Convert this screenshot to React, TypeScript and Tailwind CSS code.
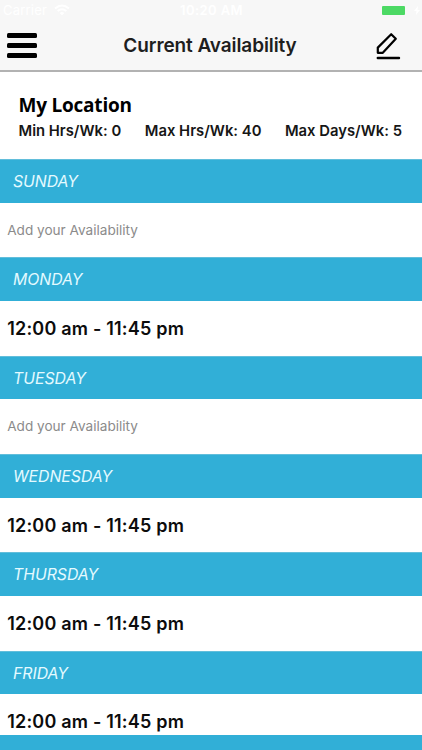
const days = [
  { name: 'SUNDAY', hours: null },
  { name: 'MONDAY', hours: '12:00 am - 11:45 pm' },
  { name: 'TUESDAY', hours: null },
  { name: 'WEDNESDAY', hours: '12:00 am - 11:45 pm' },
  { name: 'THURSDAY', hours: '12:00 am - 11:45 pm' },
  { name: 'FRIDAY', hours: '12:00 am - 11:45 pm' },
];

function StatusBar() {
  return (
    <div className="flex h-5 items-center pr-0.5 pl-[3px] text-[13px] leading-5 text-white">
      <div className="flex flex-1 items-center gap-[7px]">
        <span className="tracking-[0.2px]">Carrier</span>
        <svg width="16" height="12" viewBox="0 0 16 12" fill="none" stroke="currentColor" strokeWidth="2">
          <path d="M1 4.5Q8-1.5 15 4.5M3.6 7.1Q8 3.4 12.4 7.1" />
          <path d="M5.7 9Q8 7.2 10.3 9L8 11.4Z" fill="currentColor" stroke="none" />
        </svg>
      </div>
      <span className="font-semibold tracking-[0.4px]">10:20 AM</span>
      <div className="flex flex-1 items-center justify-end gap-[9px]">
        <span className="h-[9px] w-[23px] rounded-[1px] bg-[#4cd964]" />
        <svg width="6" height="9" viewBox="0 0 6 9" fill="currentColor">
          <path d="M4 0L0 5h2.5L2 9l4-5H3.5Z" />
        </svg>
      </div>
    </div>
  );
}

function Header() {
  return (
    <header className="h-[72px] shrink-0 border-b-2 border-[#b2b2b2] bg-[#f7f7f7]">
      <StatusBar />
      <div className="flex h-[50px] items-center justify-between pr-[21px] pl-[7px]">
        <button className="flex w-[30px] flex-col gap-[5px]" aria-label="Menu">
          <span className="h-[5px] w-full rounded-[1.5px] bg-black" />
          <span className="h-[5px] w-full rounded-[1.5px] bg-black" />
          <span className="h-[5px] w-full rounded-[1.5px] bg-black" />
        </button>
        <h1 className="pt-[2px] pl-[7px] text-[19px] font-semibold tracking-[-0.09px] whitespace-nowrap text-[#1e1e1e]">
          Current Availability
        </h1>
        <button aria-label="Edit" className="pt-px">
          <svg className="block" width="25" height="28" viewBox="0 0 25 28" fill="none" stroke="#000" strokeWidth="2.2">
            <path d="M1.8 20.8V15.6L15.2 2.2L19.8 6.8L6.8 20.8Z" strokeLinejoin="round" />
            <path d="M1.8 26H23" strokeWidth="2.4" strokeLinecap="round" />
          </svg>
        </button>
      </div>
    </header>
  );
}

export default function App() {
  return (
    <main className="flex h-[750px] w-[422px] flex-col overflow-hidden bg-white font-['Inter','Liberation_Sans',sans-serif]">
      <Header />
      <section className="h-[87.1px] shrink-0 pt-[19px] pr-[20px] pl-[18.5px]">
        <h2 className="font-['Open_Sans','Noto_Sans',sans-serif] text-[19px] leading-[28px] font-bold tracking-[-0.22px] text-black">
          My Location
        </h2>
        <div className="flex justify-between text-[14.8px] leading-6 font-semibold whitespace-nowrap text-[#161616]">
          <span>Min Hrs/Wk: 0</span>
          <span>Max Hrs/Wk: 40</span>
          <span>Max Days/Wk: 5</span>
        </div>
      </section>
      <div className="h-[575.9px] shrink-0 overflow-hidden">
        {days.map((day) => (
          <section key={day.name} className="h-[98.33px]">
            <h3 className="flex h-[43.6px] items-center border-t border-[#62bedb] bg-[#31afd7] pt-px pl-[13px] text-[15.8px] font-normal text-[#e4faff] italic">
              {day.name}
            </h3>
            <div className="flex h-[54.7px] items-center pl-[7.2px]">
              {day.hours ? (
                <span className="text-[18px] font-semibold tracking-[0.2px] text-[#0c0c0c]">{day.hours}</span>
              ) : (
                <span className="text-[13.6px] text-[#8b8b8b]">Add your Availability</span>
              )}
            </div>
          </section>
        ))}
      </div>
      <footer className="flex-1 bg-[#31afd7]" />
    </main>
  );
}
